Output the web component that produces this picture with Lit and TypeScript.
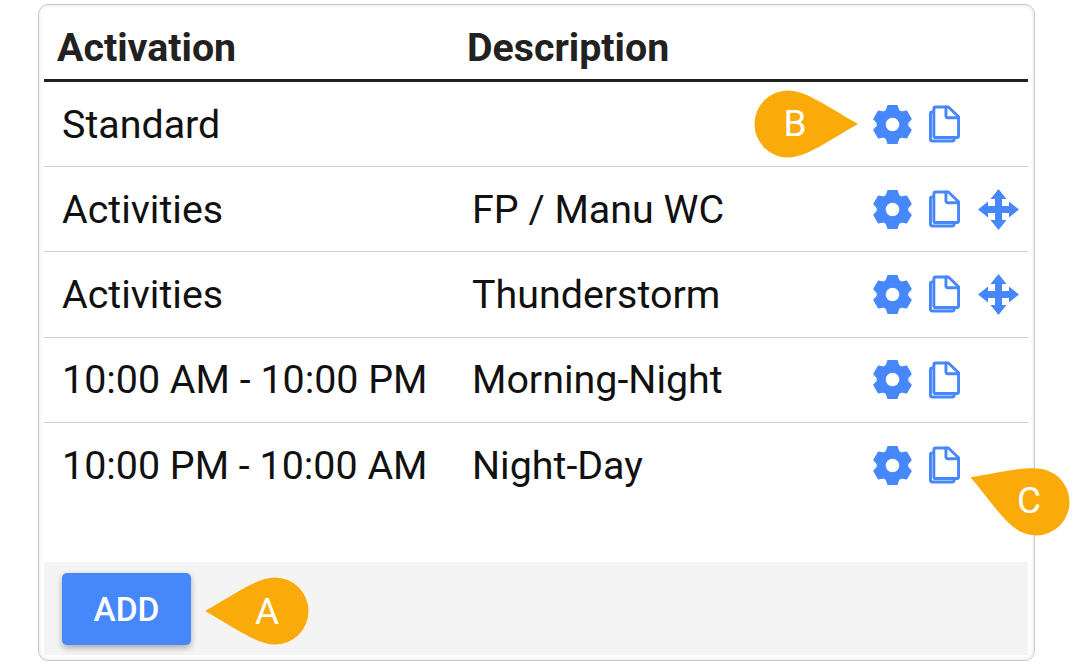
import { LitElement, html, css, svg } from "lit";
import { customElement } from "lit/decorators.js";

const ROWS = [
  { a: "Standard", d: "", move: false },
  { a: "Activities", d: "FP / Manu WC", move: true },
  { a: "Activities", d: "Thunderstorm", move: true },
  { a: "10:00 AM - 10:00 PM", d: "Morning-Night", move: false },
  { a: "10:00 PM - 10:00 AM", d: "Night-Day", move: false },
];

const CALLOUTS = [
  { t: "A", x: 275, y: 611, r: 180, dx: -8, dy: 0 },
  { t: "B", x: 788, y: 123.5, r: 0, dx: 7, dy: 0 },
  { t: "C", x: 1036, y: 502, r: 200.7, dx: -7, dy: -2 },
];

// Six-tooth cog, built tooth by tooth around the centre of a 40×40 box.
const gearPath = (() => {
  const local: [number, number][] = [[-6.2, -14], [-4.6, -18.9], [4.6, -18.9], [6.2, -14]];
  const pts: string[] = [];
  for (let k = 0; k < 6; k++) {
    const a = (k * Math.PI) / 3;
    for (const [x, y] of local) {
      pts.push(`${(20 + x * Math.cos(a) - y * Math.sin(a)).toFixed(2)} ${(20 + x * Math.sin(a) + y * Math.cos(a)).toFixed(2)}`);
    }
  }
  return `M${pts.join("L")}Z`;
})();

const gear = html`<svg class="gear" viewBox="0.5 0.5 39 39"><path fill="currentColor" stroke="currentColor" stroke-width="1.2" stroke-linejoin="round" d="${gearPath}"/><circle cx="20" cy="20" r="6.8" fill="#fff"/></svg>`;

const copy = html`<svg class="copy" viewBox="0 0 32 38"><g fill="none" stroke="currentColor" stroke-width="3" stroke-linejoin="round" stroke-linecap="round">
  <path d="M4.5 6.5H3.5a2 2 0 0 0-2 2V34.5a2 2 0 0 0 2 2H24a2 2 0 0 0 2-2V33.5"/>
  <path d="M7 1.5H20L30.5 11.5V31a2 2 0 0 1-2 2H7a2 2 0 0 1-2-2V3.5A2 2 0 0 1 7 1.5Z"/>
  <path d="M17.5 1.5V11a1.5 1.5 0 0 0 1.5 1.5H30.5"/></g></svg>`;

const move = html`<svg class="move" viewBox="0 0 41 41"><path fill="currentColor" d="M20.5 0L28.5 10H24V17H31V12.5L41 20.5L31 28.5V24H24V31H28.5L20.5 41L12.5 31H17V24H10V28.5L0 20.5L10 12.5V17H17V10H12.5Z"/></svg>`;

const drop = svg`<path fill="#fbab09" d="M0-33.5C18-33.5 40-17 70 0C40 17 18 33.5 0 33.5A33.5 33.5 0 0 1 0-33.5Z"/>`;

@customElement("app-root")
export class AppRoot extends LitElement {
  static styles = css`
    :host {
      display: block;
      position: relative;
      width: 1080px;
      height: 668px;
      background: #fff;
      overflow: hidden;
      font-family: Roboto, "Liberation Sans", sans-serif;
      color: #111;
    }
    .page { padding: 4px 45px 0 38px; }
    .card {
      box-sizing: border-box;
      height: 657px;
      padding: 0 6px 5px 5px;
      border: 1px solid #c9c9c9;
      border-radius: 10px;
      box-shadow: inset 0 0 4px rgba(0, 0, 0, 0.12);
      display: flex;
      flex-direction: column;
      background: #fff;
    }
    .head, .row {
      display: grid;
      grid-template-columns: 410px 401px 1fr;
    }
    .head {
      height: 77px;
      box-sizing: border-box;
      border-bottom: 3px solid #212121;
      font-size: 39.3px;
      font-weight: 700;
      color: #212121;
      padding-left: 13px;
    }
    .head span { line-height: 87px; }
    .row {
      height: 85.2px;
      box-sizing: border-box;
      align-items: center;
      border-bottom: 1px solid #cfcfcf;
      font-size: 39.4px;
      padding-left: 18px;
    }
    .row.last { border-bottom: none; }
    .icons {
      display: flex;
      align-items: center;
      color: #4688fb;
    }
    .gear { width: 39px; height: 39px; display: block; margin-right: 17px; }
    .copy { width: 31px; height: 38px; display: block; margin-right: 18px; }
    .move { width: 41px; height: 41px; display: block; }
    .spacer { flex: 1; }
    .foot {
      height: 93px;
      background: #f4f4f4;
      padding: 11px 18px;
      box-sizing: border-box;
    }
    .add {
      width: 129px;
      height: 72px;
      display: flex;
      align-items: center;
      justify-content: center;
      background: #4688fb;
      color: #fff;
      border-radius: 5px;
      font-size: 33.5px;
      font-weight: 500;
      box-shadow: 0 3px 6px rgba(0, 0, 0, 0.3);
    }
    .callout {
      position: absolute;
      width: 144px;
      height: 144px;
      display: flex;
      align-items: center;
      justify-content: center;
      color: #fff;
      font-size: 37px;
    }
    .callout svg { position: absolute; inset: 0; width: 144px; height: 144px; }
    .callout span { position: relative; }
  `;

  render() {
    return html`
      <div class="page">
        <div class="card">
          <div class="head"><span>Activation</span><span>Description</span></div>
          ${ROWS.map(
            (r, i) => html`<div class="row ${i === ROWS.length - 1 ? "last" : ""}">
              <div>${r.a}</div>
              <div>${r.d}</div>
              <div class="icons">${gear}${copy}${r.move ? move : ""}</div>
            </div>`
          )}
          <div class="spacer"></div>
          <div class="foot"><div class="add">ADD</div></div>
        </div>
      </div>
      ${CALLOUTS.map(
        (c) => html`<div class="callout" style="left:${c.x - 72}px;top:${c.y - 72}px">
          <svg viewBox="-72 -72 144 144"><g transform="rotate(${c.r})">${drop}</g></svg>
          <span style="left:${c.dx}px;top:${c.dy}px">${c.t}</span>
        </div>`
      )}
    `;
  }
}
